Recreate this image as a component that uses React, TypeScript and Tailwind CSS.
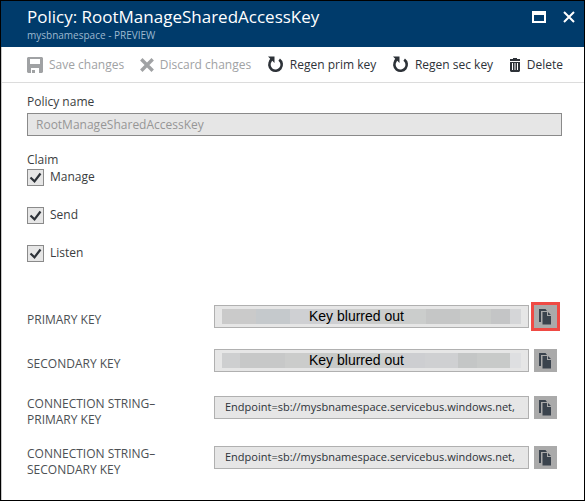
import type { ReactNode } from "react";

function SaveIcon() {
  return (
    <svg width="16" height="16" viewBox="0 0 16 16" fill="currentColor" aria-hidden="true">
      <path fillRule="evenodd" d="M1 0h14l1 1v14l-1 1h-3v-5H4v5H1l-1-1V1zM3 2v5h10V2z" />
      <path d="M5 13h3v3H5z" />
    </svg>
  );
}

function DiscardIcon() {
  return (
    <svg width="14" height="14" viewBox="0 0 14 14" stroke="currentColor" strokeWidth="3.4" aria-hidden="true">
      <path d="M1.300 1.300l11.400 11.400M12.700 1.300L1.300 12.700" />
    </svg>
  );
}

function RegenIcon() {
  return (
    <svg width="17" height="17" viewBox="0 0 17 17" fill="none" aria-hidden="true">
      <path d="M12.200 3.600A6.200 6.200 0 1 1 3.800 4.600" stroke="currentColor" strokeWidth="2.600" />
      <path d="M1 0.500h6.500V7L5.300 4.800 3.800 6 2.200 4.500 3.200 2.700z" fill="currentColor" />
    </svg>
  );
}

function TrashIcon() {
  return (
    <svg width="12" height="14" viewBox="0 0 12 14" fill="currentColor" aria-hidden="true">
      <path d="M4 0h4v1h3v2H1V1h3z" />
      <path fillRule="evenodd" d="M1 4h10v9l-1 1H2l-1-1zM3 5v7h1V5zM5.500 5v7h1V5zM8 5v7h1V5z" />
    </svg>
  );
}

function CopyIcon() {
  return (
    <svg width="13" height="16" viewBox="0 0 13 16" fill="#3a434d" aria-hidden="true">
      <path d="M0 0h6.500l1.500 2H2v11H0z" />
      <path d="M3.500 3H8v4h4v8.500H3.500z" />
      <path d="M9 3l3 3H9z" />
    </svg>
  );
}

function ToolbarButton({ icon, children, disabled }: { icon: ReactNode; children: ReactNode; disabled?: boolean }) {
  return (
    <button
      type="button"
      disabled={disabled}
      className="flex items-center gap-[6px] whitespace-nowrap text-[#2d3238] disabled:text-[#a0a2a4]"
    >
      {icon}
      {children}
    </button>
  );
}

function Claim({ name }: { name: string }) {
  return (
    <label className="flex w-fit items-start gap-[6px]">
      <span className="grid">
        <input
          type="checkbox"
          defaultChecked
          className="peer col-start-1 row-start-1 size-[17px] appearance-none border border-[#8a8a8a] bg-[#e6e6e6]"
        />
        <svg
          className="pointer-events-none invisible col-start-1 row-start-1 size-[17px] peer-checked:visible"
          viewBox="0 0 17 17"
          fill="none"
          stroke="#2d3238"
          strokeWidth="2.200"
          aria-hidden="true"
        >
          <path d="M3.500 8.500l4 3.800 6-7.800" />
        </svg>
      </span>
      <span className="leading-[15px]">{name}</span>
    </label>
  );
}

function BlurStrip({ bands }: { bands: string[] }) {
  return (
    <div className="col-start-1 row-start-1 mx-[7px] flex h-[15px] min-w-0 self-center">
      {bands.map((band, index) => (
        <span key={index} className={`min-w-0 flex-auto ${band}`} />
      ))}
    </div>
  );
}

const primaryBands = [
  "w-9 bg-[#cacaca]",
  "w-9 bg-[#c5c9cc]",
  "w-5 bg-[#cfd0d3]",
  "w-10 bg-[#cecfd2]",
  "w-9 bg-[#cbcccb]",
  "w-12 bg-[#cbcdcc]",
  "w-9 bg-[#c5c6c6]",
  "w-8 bg-[#c9cbc9]",
  "w-5 bg-[#c4c5c6]",
  "w-3 bg-[#d5d6d8]",
];

const secondaryBands = [
  "w-5 bg-[#cecfd0]",
  "w-12 bg-[#c7c8c8]",
  "w-9 bg-[#cbcccb]",
  "w-9 bg-[#c8cac8]",
  "w-11 bg-[#cbcdcc]",
  "w-9 bg-[#cdced1]",
  "w-9 bg-[#cfd0d2]",
  "w-5 bg-[#c4c6c6]",
  "w-9 bg-[#c8cac9]",
  "w-3 bg-[#dedfe1]",
];

function KeyRow({
  id,
  label,
  value,
  bands,
  highlighted,
}: {
  id: string;
  label: ReactNode;
  value: string;
  bands?: string[];
  highlighted?: boolean;
}) {
  return (
    <div className="flex items-start">
      <label
        htmlFor={id}
        className={`w-[187px] shrink-0 leading-4 text-[#4c5054] ${bands ? "pt-[7px]" : ""}`}
      >
        {label}
      </label>
      <div className="grid h-[23px] min-w-0 flex-1 grid-cols-1 border border-[#b0b0b0] bg-[#e6e6e6]">
        {bands && <BlurStrip bands={bands} />}
        <input
          id={id}
          readOnly
          defaultValue={value}
          className={
            bands
              ? "z-10 col-start-1 row-start-1 w-full min-w-0 bg-transparent pl-[94px] font-['Liberation_Sans',Arial,sans-serif] text-[14px] text-black outline-none"
              : "col-start-1 row-start-1 w-full min-w-0 bg-transparent pr-[2px] pl-[10px] text-[11px] text-[#2d3238] outline-none"
          }
        />
      </div>
      <button
        type="button"
        aria-label="Copy"
        className={`ml-[5px] flex size-[23px] shrink-0 items-center justify-center bg-[#aaaaaa] ${
          highlighted ? "ring-3 ring-[#ef4a44]" : ""
        }`}
      >
        <CopyIcon />
      </button>
    </div>
  );
}

export default function App() {
  return (
    <div className="flex min-h-screen flex-col border border-black bg-white font-['Open_Sans','Noto_Sans',sans-serif] text-[12px] text-[#3a3d40]">
      <header className="flex h-[46px] items-start justify-between bg-[#003b6b] pr-[9px] pl-[26px] text-white">
        <div className="pt-[5px]">
          <h1 className="text-[17px] leading-[22px]">Policy: RootManageSharedAccessKey</h1>
          <p className="text-[10px] leading-[14px] text-[#9db9d0]">mysbnamespace - PREVIEW</p>
        </div>
        <div className="flex gap-[17px] pt-[10px]">
          <button type="button" aria-label="Maximize">
            <svg width="14" height="12" viewBox="0 0 14 12" fill="#fff" fillRule="evenodd">
              <path d="M0 0h14v12H0zM2 4v6h10V4z" />
            </svg>
          </button>
          <button type="button" aria-label="Close">
            <svg width="12" height="12" viewBox="0 0 12 12" stroke="#fff" strokeWidth="2">
              <path d="M1 1l10 10M11 1L1 11" />
            </svg>
          </button>
        </div>
      </header>

      <div className="flex flex-1 flex-col border-l border-[#c8c8c8]">
        <div className="flex h-[36px] items-center justify-between border-b border-[#dcdcdc] pr-[21px] pl-[25px]">
          <ToolbarButton icon={<SaveIcon />} disabled>
            Save changes
          </ToolbarButton>
          <ToolbarButton icon={<DiscardIcon />} disabled>
            Discard changes
          </ToolbarButton>
          <ToolbarButton icon={<RegenIcon />}>Regen prim key</ToolbarButton>
          <ToolbarButton icon={<RegenIcon />}>Regen sec key</ToolbarButton>
          <ToolbarButton icon={<TrashIcon />}>Delete</ToolbarButton>
        </div>

        <form className="pt-[11px] pr-[22px] pl-[25px]">
          <label htmlFor="policy-name" className="block leading-4">
            Policy name
          </label>
          <input
            id="policy-name"
            disabled
            defaultValue="RootManageSharedAccessKey"
            className="mt-[3px] block h-[23px] w-full border border-[#8a8a8a] bg-[#e6e6e6] px-2 text-[#969696]"
          />

          <fieldset className="mt-4">
            <legend className="leading-4">Claim</legend>
            <div className="flex flex-col gap-[21px] pt-px">
              <Claim name="Manage" />
              <Claim name="Send" />
              <Claim name="Listen" />
            </div>
          </fieldset>

          <div className="flex flex-col pt-[43px] pr-[5px]">
            <KeyRow id="primary-key" label="PRIMARY KEY" value="Key blurred out" bands={primaryBands} highlighted />
            <div className="mt-[21px]">
              <KeyRow id="secondary-key" label="SECONDARY KEY" value="Key blurred out" bands={secondaryBands} />
            </div>
            <div className="mt-6 flex flex-col gap-[18px]">
              <KeyRow
                id="primary-connection"
                label={
                  <>
                    CONNECTION STRING–
                    <br />
                    PRIMARY KEY
                  </>
                }
                value="Endpoint=sb://mysbnamespace.servicebus.windows.net,"
              />
              <KeyRow
                id="secondary-connection"
                label={
                  <>
                    CONNECTION STRING–
                    <br />
                    SECONDARY KEY
                  </>
                }
                value="Endpoint=sb://mysbnamespace.servicebus.windows.net,"
              />
            </div>
          </div>
        </form>
      </div>
    </div>
  );
}
